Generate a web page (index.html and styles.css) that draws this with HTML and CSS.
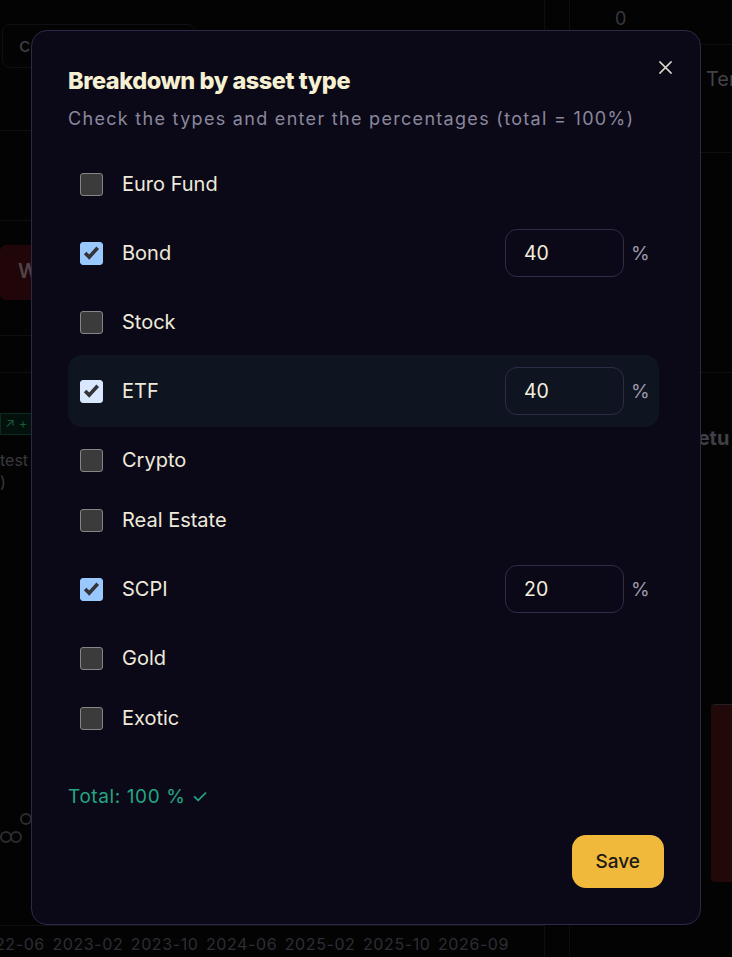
FILE: index.html
```html
<!DOCTYPE html>
<html lang="en">
<head>
<meta charset="utf-8">
<title>Breakdown by asset type</title>
<link rel="stylesheet" href="styles.css">
</head>
<body>
<div class="app">
  <div class="app-left">
    <div class="search">c</div>
    <div class="hline hl-1"></div>
    <div class="hline hl-2"></div>
    <div class="danger-btn">W</div>
    <div class="hline hl-3"></div>
    <div class="hline hl-4"></div>
    <div class="badge">↗ +</div>
    <div class="muted-text">test<br>)</div>
    <div class="chart-dots">
      <span class="dot"></span><span class="dot"></span><span class="dot up"></span>
    </div>
    <div class="axis">
      <span>22-06</span><span>2023-02</span><span>2023-10</span><span>2024-06</span><span>2025-02</span><span>2025-10</span><span>2026-09</span>
    </div>
  </div>
  <div class="app-gap"></div>
  <div class="app-right">
    <div class="zero">0</div>
    <div class="tab">Ter</div>
    <div class="hline hr-1"></div>
    <div class="hline hr-2"></div>
    <div class="ret">retu</div>
    <div class="red-bar"></div>
  </div>
</div>

<div class="overlay">
  <div class="modal">
    <button class="close" aria-label="Close">
      <svg viewBox="0 0 16 16" width="16" height="16"><path d="M2 2 L14 14 M14 2 L2 14" stroke="currentColor" stroke-width="1.6" stroke-linecap="round" fill="none"/></svg>
    </button>
    <h2 class="title">Breakdown by asset type</h2>
    <p class="subtitle">Check the types and enter the percentages (total = 100%)</p>
    <ul class="types">
      <li class="row"><span class="cb"></span><span class="label">Euro Fund</span></li>
      <li class="row"><span class="cb on"><svg viewBox="0 0 22 22"><path d="M4.3 11 L8.6 15.3 L17.5 5.5" /></svg></span><span class="label">Bond</span><span class="pct"><span class="field">40</span><span class="unit">%</span></span></li>
      <li class="row"><span class="cb"></span><span class="label">Stock</span></li>
      <li class="row hover"><span class="cb on light"><svg viewBox="0 0 22 22"><path d="M4.3 11 L8.6 15.3 L17.5 5.5" /></svg></span><span class="label">ETF</span><span class="pct"><span class="field">40</span><span class="unit">%</span></span></li>
      <li class="row"><span class="cb"></span><span class="label">Crypto</span></li>
      <li class="row"><span class="cb"></span><span class="label">Real Estate</span></li>
      <li class="row"><span class="cb on"><svg viewBox="0 0 22 22"><path d="M4.3 11 L8.6 15.3 L17.5 5.5" /></svg></span><span class="label">SCPI</span><span class="pct"><span class="field">20</span><span class="unit">%</span></span></li>
      <li class="row"><span class="cb"></span><span class="label">Gold</span></li>
      <li class="row"><span class="cb"></span><span class="label">Exotic</span></li>
    </ul>
    <div class="total">Total: 100 % ✓</div>
    <div class="actions"><button class="save">Save</button></div>
  </div>
</div>
</body>
</html>
```

FILE: styles.css
```css
* { box-sizing: border-box; }
html, body { margin: 0; padding: 0; }
body {
  width: 732px;
  height: 957px;
  overflow: hidden;
  background: #040406;
  font-family: Inter, "Noto Sans", sans-serif;
  position: relative;
}

/* ---------- background app ---------- */
.app {
  display: grid;
  grid-template-columns: 545px 25px 1fr;
  height: 957px;
  color: #4a4a52;
}
.app-left { display: flex; flex-direction: column; border-right: 1px solid #121218; }
.app-gap { border-right: 1px solid #121218; }
.search {
  margin: 24px 0 0 2px;
  width: 194px;
  height: 44px;
  border: 1px solid #15151b;
  border-radius: 8px;
  padding: 8px 16px;
  font-size: 20px;
  color: #55555c;
}
.hline { height: 1px; background: #141419; }
.hl-1 { margin-top: 62px; }
.hl-2 { margin-top: 89px; }
.danger-btn {
  margin-top: 24px;
  height: 55px;
  width: 120px;
  background: #2b070c;
  border-radius: 6px;
  color: #6a5a5e;
  font-size: 20px;
  font-weight: 600;
  padding: 14px 18px;
}
.hl-3 { margin-top: 35px; }
.hl-4 { margin-top: 36px; }
.badge {
  margin-top: 40px;
  width: 80px;
  height: 22px;
  border: 1px solid #0f3a26;
  background: #06160f;
  color: #1f7a4c;
  font-size: 13px;
  padding: 1px 4px;
}
.muted-text { margin-top: 14px; font-size: 16px; line-height: 22px; color: #4c4c52; padding-left: 0; }
.chart-dots { margin-top: 320px; display: flex; align-items: flex-end; gap: 0; padding-left: 0; }
.dot { width: 12px; height: 12px; border: 2px solid #3a3a40; border-radius: 50%; margin-right: -2px; }
.dot.up { margin-bottom: 18px; }
.axis {
  margin-top: auto;
  height: 32px;
  border-top: 1px solid #141419;
  display: flex;
  gap: 7.5px;
  padding: 8px 0 0 0;
  margin-left: -5px;
  font-size: 16px;
  letter-spacing: 0.6px;
  color: #3c3c44;
  white-space: nowrap;
}
.app-right { display: flex; flex-direction: column; }
.zero { padding: 8px 0 0 45px; font-size: 18px; color: #4a4a50; height: 45px; border-bottom: 1px solid #141419; }
.tab { margin-left: 136px; margin-top: 22px; font-size: 20px; color: #58585e; }
.hr-1 { margin-top: 61px; }
.hr-2 { margin-top: 219px; }
.ret { margin-top: 53px; margin-left: 120px; font-size: 20px; font-weight: 700; color: #56565c; }
.red-bar { margin: 254px 0 0 141px; height: 178px; background: #2c0b0d; border-radius: 4px 0 0 4px; border-top: 1px solid #2a2a30; }

/* ---------- overlay & modal ---------- */
.overlay {
  position: absolute;
  inset: 0;
  padding: 30px 31px 32px 31px;
  background: rgba(0, 0, 0, 0.25);
}
.modal {
  position: relative;
  height: 895px;
  background: #0b0918;
  border: 1px solid #2c2947;
  border-radius: 16px;
  padding: 36px 36px 36px 36px;
  display: flex;
  flex-direction: column;
}
.close {
  position: absolute;
  top: 24px;
  right: 23px;
  width: 24px;
  height: 24px;
  padding: 4px;
  border: 0;
  background: transparent;
  color: #ddd8c8;
  display: flex;
  align-items: center;
  justify-content: center;
}
.close svg { width: 15px; height: 15px; }
.title {
  margin: 0;
  font-size: 23.5px;
  line-height: 28px;
  font-weight: 800;
  letter-spacing: -0.45px;
  color: #f6f0d2;
}
.subtitle {
  margin: 12px 0 0 0;
  font-size: 18px;
  line-height: 24px;
  letter-spacing: 1.3px;
  color: #8a879c;
}
.types {
  list-style: none;
  margin: 26px 5px 0 0;
  padding: 0;
  display: flex;
  flex-direction: column;
  gap: 6px;
}
.row {
  display: flex;
  align-items: center;
  min-height: 54px;
  padding: 12px;
  border-radius: 14px;
}
.row.hover { background: #0e1521; }
.cb {
  width: 23px;
  height: 23px;
  flex: none;
  border-radius: 3px;
  background: #3b3b3b;
  border: 1px solid #858585;
  display: flex;
  align-items: center;
  justify-content: center;
}
.cb.on { background: #99c8ff; border-color: #99c8ff; }
.cb.on.light { background: #d9e8ff; border-color: #d9e8ff; }
.cb svg { width: 22px; height: 22px; }
.cb svg path { fill: none; stroke: #333338; stroke-width: 3.8; stroke-linecap: butt; stroke-linejoin: miter; }
.label {
  margin-left: 19px;
  font-size: 20px;
  color: #eeeadb;
  flex: 1;
}
.pct { display: flex; align-items: center; gap: 7px; }
.field {
  width: 119px;
  height: 48px;
  border: 1px solid #2f2c48;
  border-radius: 12px;
  padding: 0 18px;
  display: flex;
  align-items: center;
  font-size: 19.5px;
  color: #f4efdc;
}
.unit { font-size: 19px; color: #9c98ac; width: 16px; }
.total {
  margin-top: 40px;
  font-size: 19px;
  line-height: 24px;
  letter-spacing: 0.6px;
  color: #23a583;
}
.actions { margin-top: auto; display: flex; justify-content: flex-end; }
.save {
  height: 53px;
  padding: 0 24px;
  border: 0;
  border-radius: 14px;
  background: #f0b93b;
  color: #1c1a14;
  font-family: Inter, "Noto Sans", sans-serif;
  font-size: 19px;
  font-weight: 500;
}
```
